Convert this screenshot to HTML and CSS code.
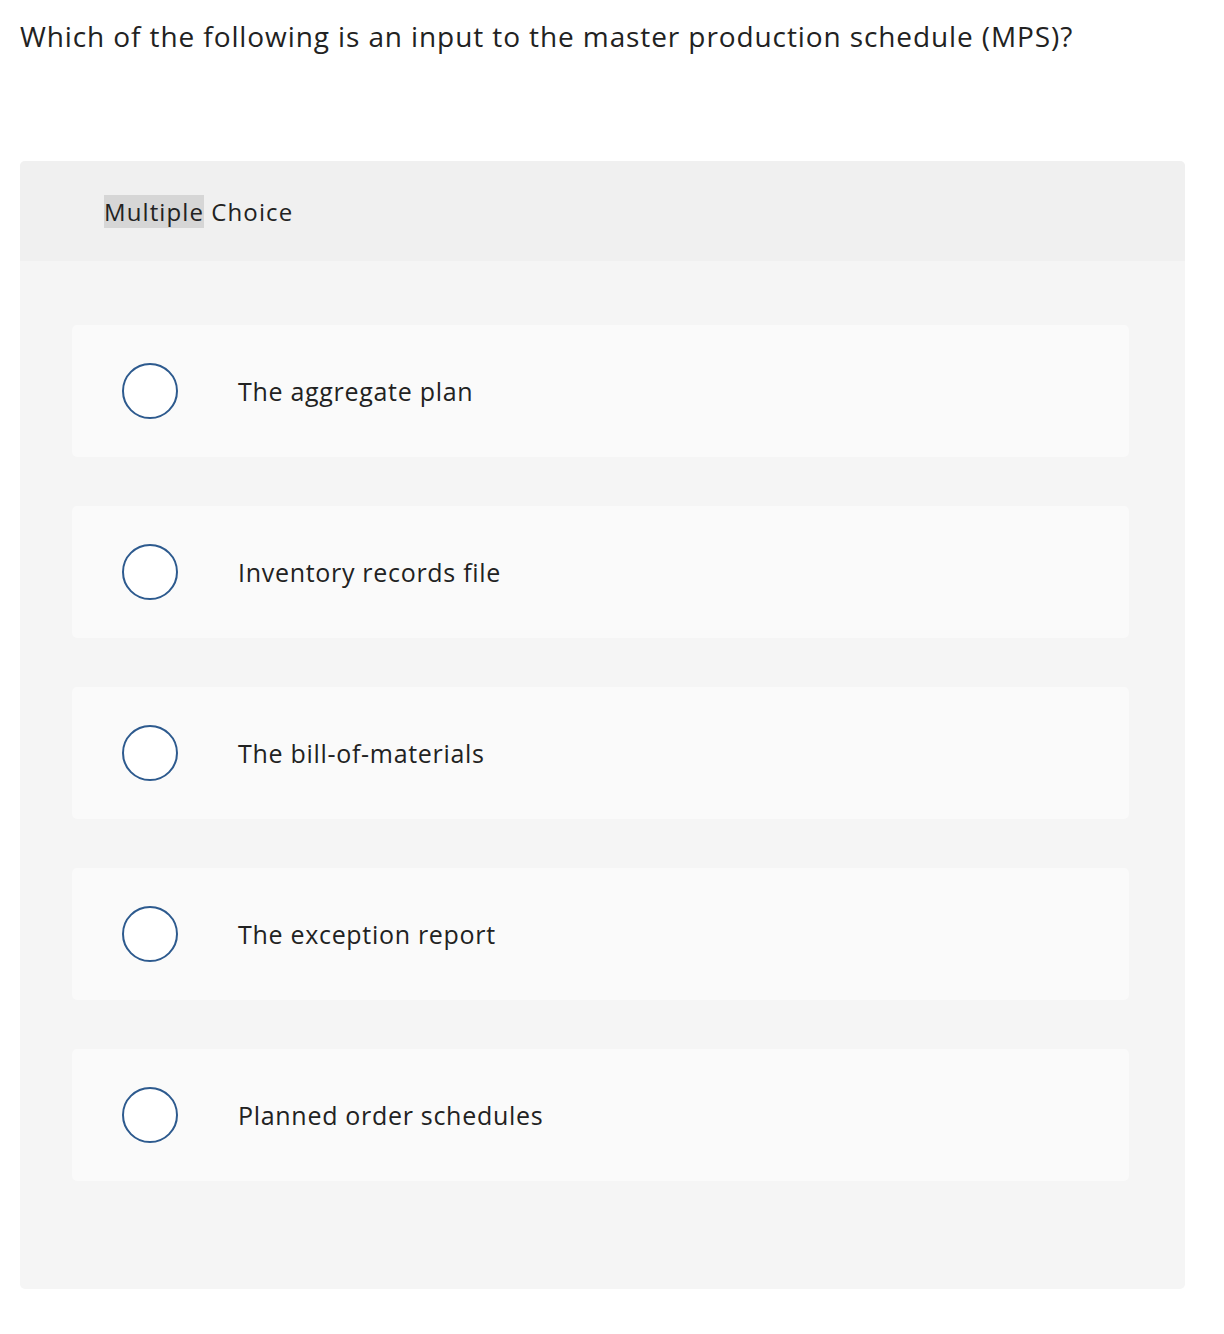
FILE: index.html
```html
<!DOCTYPE html>
<html>
<head>
<meta charset="utf-8">
<link rel="stylesheet" href="styles.css">
</head>
<body>
<div class="page">
  <p class="question">Which of the following is an input to the master production schedule (MPS)?</p>
  <div class="card">
    <div class="card-head"><span class="label"><span class="hl">Multiple</span> Choice</span></div>
    <div class="card-body">
      <div class="option"><span class="radio"></span><span class="opt-text">The aggregate plan</span></div>
      <div class="option"><span class="radio"></span><span class="opt-text">Inventory records file</span></div>
      <div class="option"><span class="radio"></span><span class="opt-text">The bill-of-materials</span></div>
      <div class="option"><span class="radio"></span><span class="opt-text">The exception report</span></div>
      <div class="option"><span class="radio"></span><span class="opt-text">Planned order schedules</span></div>
    </div>
  </div>
</div>
</body>
</html>
```

FILE: styles.css
```css
html, body {
  margin: 0;
  padding: 0;
  background: #ffffff;
}
.page {
  padding: 0 39px 0 20px;
  font-family: "Open Sans", "Liberation Sans", sans-serif;
  color: #222222;
}
.question {
  margin: 0;
  padding-top: 18px;
  height: 161px;
  box-sizing: border-box;
  font-size: 28px;
  line-height: 36px;
  letter-spacing: 0.9px;
}
.card {
  width: 1165px;
  border-radius: 5px;
  overflow: hidden;
  background: #f5f5f5;
}
.card-head {
  height: 100px;
  background: #f0f0f0;
  display: flex;
  align-items: center;
  padding-left: 84px;
}
.label {
  font-size: 24px;
  line-height: 31px;
  letter-spacing: 1.1px;
}
.hl {
  background: #d6d6d6;
}
.card-body {
  padding: 64px 56px 108px 52px;
  display: flex;
  flex-direction: column;
  gap: 49px;
}
.option {
  height: 132px;
  background: #fafafa;
  border-radius: 5px;
  display: flex;
  align-items: center;
  padding-left: 50px;
}
.radio {
  width: 52px;
  height: 52px;
  border: 2px solid #2d5a8e;
  border-radius: 50%;
  background: #ffffff;
  flex: none;
}
.opt-text {
  margin-left: 60px;
  font-size: 25px;
  line-height: 32px;
  letter-spacing: 0.7px;
}
```
